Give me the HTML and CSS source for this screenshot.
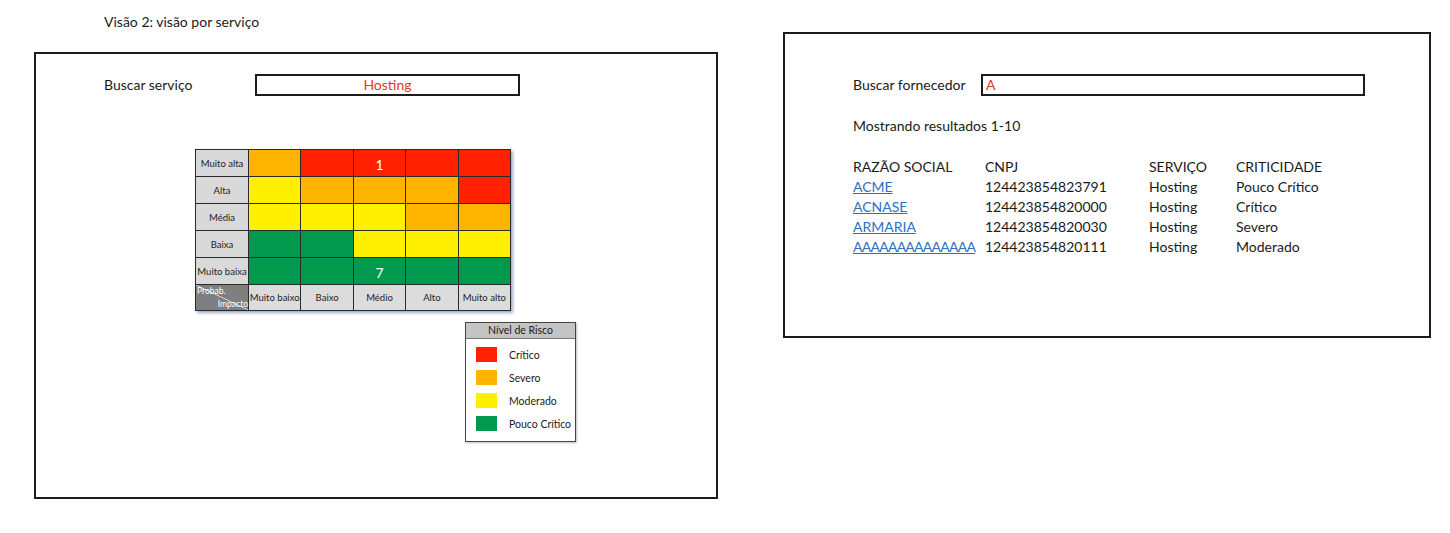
FILE: index.html
```html
<!DOCTYPE html>
<html lang="pt">
<head>
<meta charset="utf-8">
<title>Visão 2: visão por serviço</title>
<link rel="stylesheet" href="styles.css">
</head>
<body>
<div class="page">
  <div class="left-col">
    <div class="title">Visão 2: visão por serviço</div>
    <section class="panel panel-left">
      <div class="search-row">
        <span class="search-label label-servico">Buscar serviço</span>
        <div class="search-box box-servico">Hosting</div>
      </div>

      <div class="matrix">
        <div class="rlabel">Muito alta</div>
        <div class="c or"></div><div class="c rd"></div><div class="c rd">1</div><div class="c rd"></div><div class="c rd"></div>
        <div class="rlabel">Alta</div>
        <div class="c ye"></div><div class="c or"></div><div class="c or"></div><div class="c or"></div><div class="c rd"></div>
        <div class="rlabel">Média</div>
        <div class="c ye"></div><div class="c ye"></div><div class="c ye"></div><div class="c or"></div><div class="c or"></div>
        <div class="rlabel">Baixa</div>
        <div class="c gr"></div><div class="c gr"></div><div class="c ye"></div><div class="c ye"></div><div class="c ye"></div>
        <div class="rlabel">Muito baixa</div>
        <div class="c gr"></div><div class="c gr"></div><div class="c gr">7</div><div class="c gr"></div><div class="c gr"></div>
        <div class="corner"><span class="probab">Probab.</span><span class="impacto">Impacto</span></div>
        <div class="clabel">Muito baixo</div><div class="clabel">Baixo</div><div class="clabel">Médio</div><div class="clabel">Alto</div><div class="clabel">Muito alto</div>
      </div>

      <div class="legend">
        <div class="legend-head">Nível de Risco</div>
        <div class="legend-item"><span class="sw rd"></span><span>Crítico</span></div>
        <div class="legend-item"><span class="sw or"></span><span>Severo</span></div>
        <div class="legend-item"><span class="sw ye"></span><span>Moderado</span></div>
        <div class="legend-item"><span class="sw gr"></span><span>Pouco Crítico</span></div>
      </div>
    </section>
  </div>

  <section class="panel panel-right">
    <div class="search-row">
      <span class="search-label label-fornecedor">Buscar fornecedor</span>
      <div class="search-box box-fornecedor">A</div>
    </div>
    <div class="showing">Mostrando resultados 1-10</div>
    <div class="results">
      <div class="th">RAZÃO SOCIAL</div><div class="th">CNPJ</div><div class="th">SERVIÇO</div><div class="th">CRITICIDADE</div>
      <a class="link" href="#">ACME</a><div>124423854823791</div><div>Hosting</div><div>Pouco Crítico</div>
      <a class="link" href="#">ACNASE</a><div>124423854820000</div><div>Hosting</div><div>Crítico</div>
      <a class="link" href="#">ARMARIA</a><div>124423854820030</div><div>Hosting</div><div>Severo</div>
      <a class="link link-tight" href="#">AAAAAAAAAAAAAA</a><div>124423854820111</div><div>Hosting</div><div>Moderado</div>
    </div>
  </section>
</div>
</body>
</html>
```

FILE: styles.css
```css
* { box-sizing: border-box; }
html, body { margin: 0; padding: 0; background: #fff; }
body {
  font-family: "Lato", "Liberation Sans", sans-serif;
  font-size: 14px;
  color: #1a1a1a;
  width: 1450px;
  height: 533px;
  overflow: hidden;
}
.page {
  display: flex;
  align-items: flex-start;
  padding-left: 34px;
}
.left-col {
  display: flex;
  flex-direction: column;
}
.title {
  height: 52px;
  padding-top: 13px;
  padding-left: 70px;
  line-height: 18px;
}
.panel {
  border: 2px solid #1c1c1c;
  background: #fff;
}
.panel-left {
  width: 684px;
  height: 447px;
  padding: 20px 0 0 68px;
}
.panel-right {
  margin-left: 65px;
  margin-top: 32px;
  width: 648px;
  height: 306px;
  padding: 40px 0 0 68px;
}
.search-row {
  display: flex;
  align-items: center;
  height: 22px;
}
.search-label { line-height: 22px; }
.label-servico { width: 151px; }
.label-fornecedor { width: 128px; }
.search-box {
  height: 22px;
  border: 2px solid #1c1c1c;
  color: #e8352a;
  line-height: 18px;
}
.box-servico { width: 265px; text-align: center; }
.box-fornecedor { width: 384px; padding-left: 3px; }

/* Risk matrix */
.matrix {
  margin: 53px 0 0 91px;
  width: 316px;
  display: grid;
  grid-template-columns: 52px repeat(5, 1fr);
  grid-template-rows: repeat(5, 26px) 25px;
  gap: 1px;
  background: #2a2a2a;
  padding: 1px;
  box-shadow: 2px 2px 3px rgba(70, 100, 150, 0.55);
}
.rlabel, .clabel {
  background: #d9d9d9;
  color: #222;
  font-size: 9.5px;
  display: flex;
  align-items: center;
  justify-content: center;
  white-space: nowrap;
}
.clabel { background: #dcdcdc; }
.c {
  color: #fff;
  font-size: 14px;
  display: flex;
  align-items: flex-end;
  justify-content: center;
  padding-bottom: 3px;
}
.rd { background: #ff2100; }
.or { background: #ffb400; }
.ye { background: #fff000; }
.gr { background: #00994d; }
.corner {
  position: relative;
  background: linear-gradient(to top right, #7f7f7f calc(50% - 0.7px), #eeeeee 50%, #7f7f7f calc(50% + 0.7px));
  color: #fff;
  font-size: 8.5px;
  line-height: 10px;
}
.probab { position: absolute; left: 1px; top: 1px; }
.impacto { position: absolute; right: 0; bottom: 1px; }

/* Legend */
.legend {
  margin: 11px 0 0 361px;
  width: 111px;
  border: 1px solid #444;
  box-shadow: 1px 1px 2px rgba(0,0,0,0.25);
  font-size: 10.5px;
  padding-bottom: 6px;
}
.legend-head {
  background: #c4c4c4;
  border-bottom: 1px solid #777;
  text-align: center;
  height: 16px;
  line-height: 15px;
}
.legend-item {
  display: flex;
  align-items: center;
  height: 23px;
  padding-left: 10px;
}
.legend-head + .legend-item { margin-top: 4px; }
.sw {
  width: 21px;
  height: 15px;
  margin-right: 12px;
}

/* Right panel */
.showing {
  margin-top: 21px;
  line-height: 18px;
}
.results {
  margin-top: 22px;
  display: grid;
  grid-template-columns: 132px 164px 87px auto;
  grid-auto-rows: 20px;
  line-height: 20px;
}
.link {
  color: #2e6fbf;
  text-decoration: underline;
  white-space: nowrap;
}
.link-tight { letter-spacing: -0.75px; }
```
